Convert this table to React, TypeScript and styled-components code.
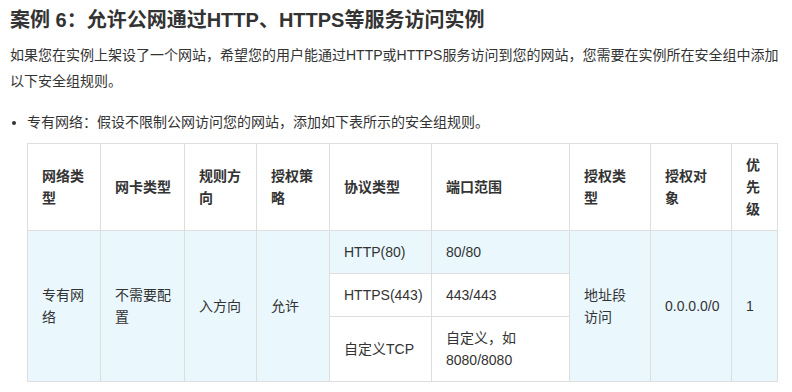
import React from "react";
import styled, { createGlobalStyle } from "styled-components";

const Global = createGlobalStyle`
  html, body { margin: 0; padding: 0; background: #fff; }
  body {
    font-family: "Liberation Sans", "Noto Sans CJK SC", sans-serif;
    color: #333;
    font-size: 14px;
  }
`;

const Page = styled.div`
  padding: 6px 10px 0 10px;
  width: 792px;
  box-sizing: border-box;
`;

const Title = styled.h3`
  margin: 0;
  font-size: 20px;
  line-height: 28px;
  font-weight: 700;
  color: #333;
`;

const Para = styled.p`
  margin: 8px 0 0 0;
  font-size: 14px;
  line-height: 26px;
`;

const List = styled.ul`
  margin: 15px 0 0 0;
  padding: 0 0 0 17px;
  list-style: disc;
`;

const Item = styled.li`
  font-size: 14px;
  line-height: 26px;
`;

const Table = styled.table`
  margin-top: 8px;
  border-collapse: collapse;
  table-layout: fixed;
  width: 750px;
  font-size: 14px;
  line-height: 22px;
`;

const Th = styled.th`
  border: 1px solid #dedede;
  padding: 10px 12px 10px 14px;
  text-align: left;
  vertical-align: middle;
  font-weight: 700;
  background: #fff;
`;

const Td = styled.td<{ $blue?: boolean }>`
  border: 1px solid #dedede;
  padding: 10px 12px 10px 14px;
  text-align: left;
  vertical-align: middle;
  background: ${(p) => (p.$blue ? "#eaf8fe" : "#fff")};
`;

const widths = [73, 84, 72, 73, 102, 138, 81, 81, 46];
const heads = ["网络类型", "网卡类型", "规则方向", "授权策略", "协议类型", "端口范围", "授权类型", "授权对象", "优先级"];

export default function App() {
  return (
    <Page>
      <Global />
      <Title>案例 6：允许公网通过HTTP、HTTPS等服务访问实例</Title>
      <Para>
        如果您在实例上架设了一个网站，希望您的用户能通过HTTP或HTTPS服务访问到您的网站，您需要在实例所在安全组中添加以下安全组规则。
      </Para>
      <List>
        <Item>
          专有网络：假设不限制公网访问您的网站，添加如下表所示的安全组规则。
          <Table>
            <colgroup>
              {widths.map((w, i) => (
                <col key={i} style={{ width: w }} />
              ))}
            </colgroup>
            <thead>
              <tr>
                {heads.map((h) => (
                  <Th key={h}>{h}</Th>
                ))}
              </tr>
            </thead>
            <tbody>
              <tr>
                <Td $blue rowSpan={3}>专有网络</Td>
                <Td $blue rowSpan={3}>不需要配置</Td>
                <Td $blue rowSpan={3}>入方向</Td>
                <Td $blue rowSpan={3}>允许</Td>
                <Td $blue>HTTP(80)</Td>
                <Td $blue>80/80</Td>
                <Td $blue rowSpan={3}>地址段访问</Td>
                <Td $blue rowSpan={3}>0.0.0.0/0</Td>
                <Td $blue rowSpan={3}>1</Td>
              </tr>
              <tr>
                <Td>HTTPS(443)</Td>
                <Td>443/443</Td>
              </tr>
              <tr>
                <Td>自定义TCP</Td>
                <Td>自定义，如8080/8080</Td>
              </tr>
            </tbody>
          </Table>
        </Item>
      </List>
    </Page>
  );
}
